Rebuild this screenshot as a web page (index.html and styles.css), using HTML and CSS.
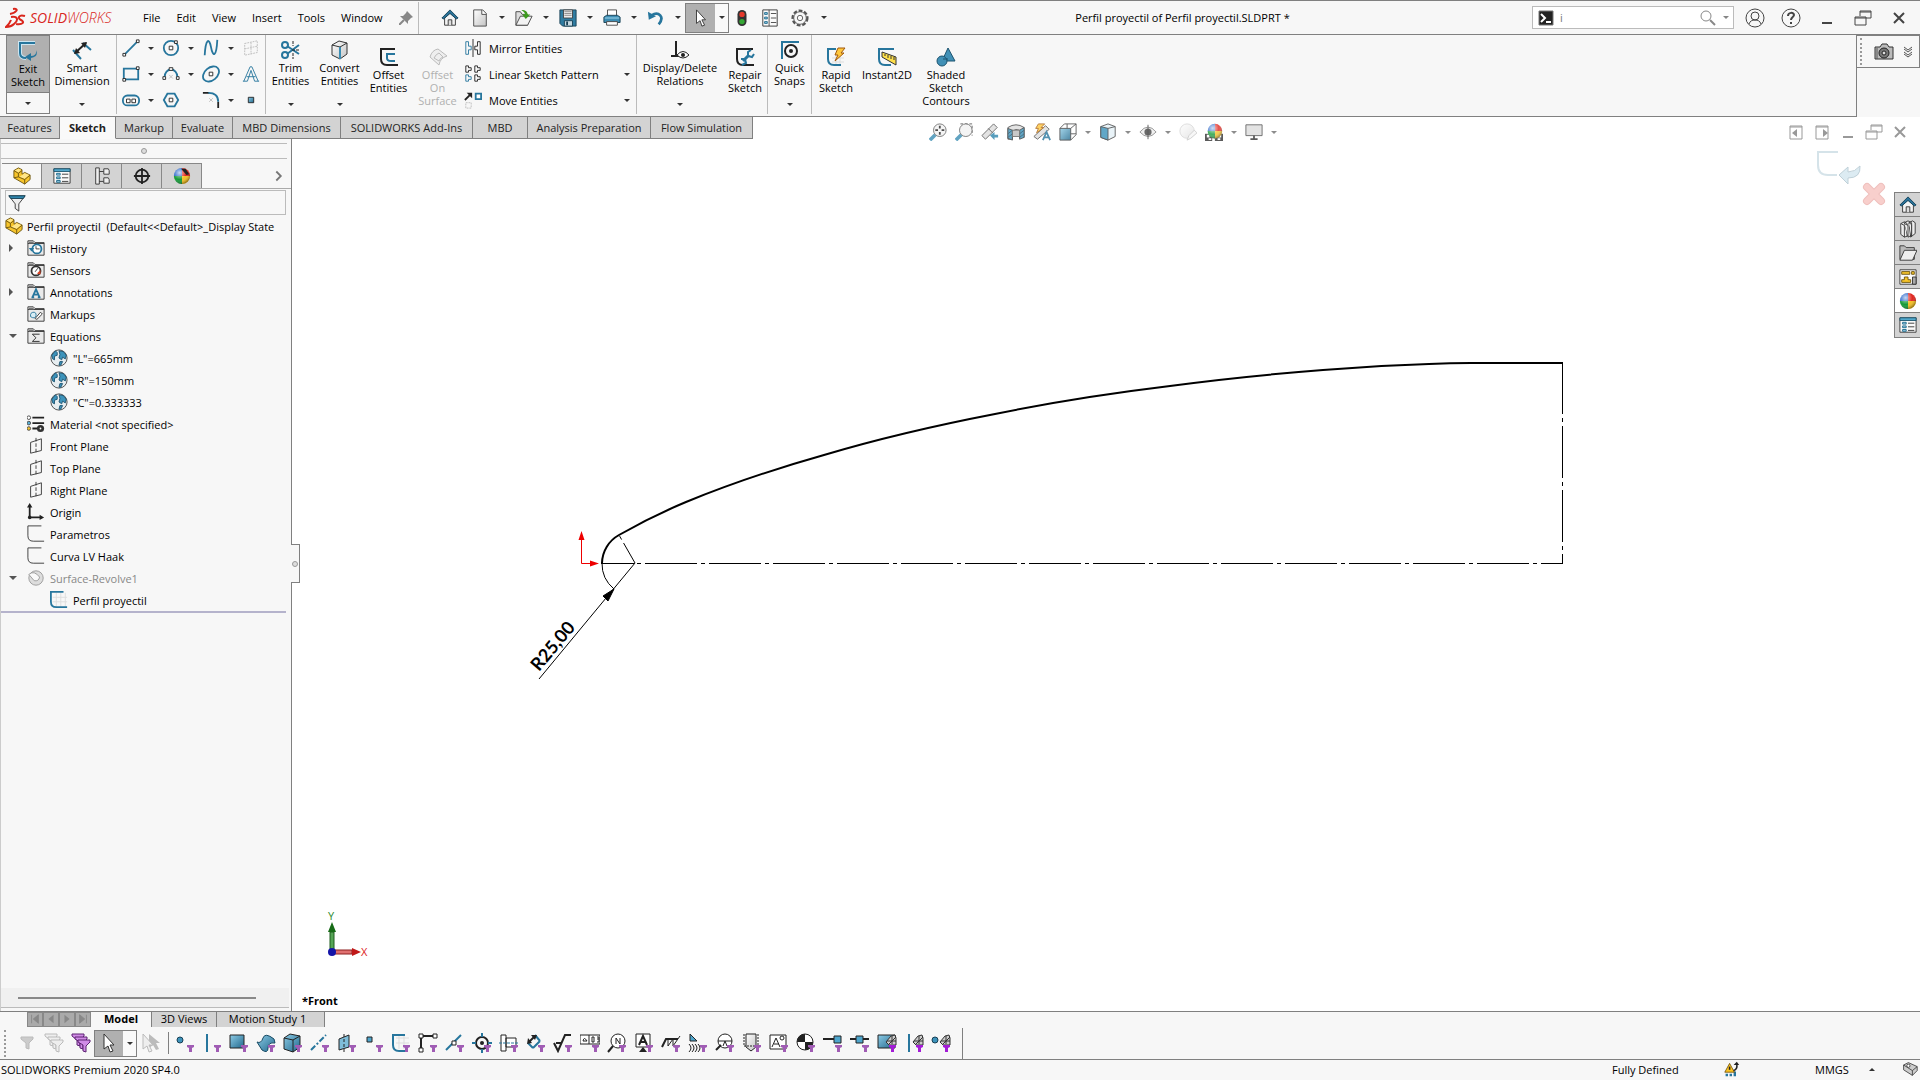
FILE: index.html
```html
<!DOCTYPE html>
<html lang="en">
<head>
  <meta charset="UTF-8">
  <meta name="viewport" content="width=device-width, initial-scale=1.0">
  <title>Perfil proyectil of Perfil proyectil.SLDPRT *</title>
  <link rel="stylesheet" href="styles.css">
</head>
<body>

  <!-- shared icons -->
  <svg class="sprite" width="0" height="0">
    <defs>
      <linearGradient id="blueFill" x1="0" y1="0" x2="1" y2="1"><stop offset="0" stop-color="#8ccbe6"/><stop offset="1" stop-color="#21688c"/></linearGradient>
      <linearGradient id="greyFill" x1="0" y1="0" x2="1" y2="1"><stop offset="0" stop-color="#fff"/><stop offset="1" stop-color="#c4c4c4"/></linearGradient>
      <radialGradient id="shine" cx=".35" cy=".3" r=".7"><stop offset="0" stop-color="#fff" stop-opacity=".75"/><stop offset=".6" stop-color="#fff" stop-opacity="0"/><stop offset="1" stop-color="#000" stop-opacity=".35"/></radialGradient>
    </defs>
    <symbol id="home" viewBox="0 0 20 20"><path d="M4 10v8h12v-8l-6-6z" fill="#f4f4f4" stroke="#333"/><path d="M8 18v-6h4v6" fill="#ddd" stroke="#333"/><path d="M1 10l9-9 9 9-2 1-7-6-7 6z" fill="#2a7399" stroke="#123f57"/></symbol>
    <symbol id="part" viewBox="0 0 20 20"><path d="M1 4l5-3 4 2v5l3-2 6 3v5l-6 5-12-7z" fill="#f7c52b" stroke="#6b5310"/><path d="M2 4l4-2 3 1-3 3zM7 11l6-4 5 2-5 4z" fill="#ffe68a"/><path d="M1 4l5 3v4l7 3v5M6 7l4-3M13 14l6-5M1 12l5-1" fill="none" stroke="#6b5310"/></symbol>
    <symbol id="list" viewBox="0 0 20 20"><path d="M1 2h18v16H1z" fill="#fafafa" stroke="#333"/><path d="M1 2h18v3H1z" fill="#52a8cc" stroke="#1d566f"/><path d="M4 7h4v2H4zM4 11h4v2H4zM4 15h4v2H4z" fill="#9fd0e6" stroke="#1d6a8c"/><path d="M10 8h7M10 12h7M10 16h7" stroke="#333"/></symbol>
    <symbol id="ball" viewBox="0 0 20 20"><path d="M10 10L10 1A9 9 0 0 1 19 10z" fill="#e0261f"/><path d="M10 10H19A9 9 0 0 1 10 19z" fill="#f6c022"/><path d="M10 10V19A9 9 0 0 1 1 10z" fill="#159a38"/><path d="M10 10H1A9 9 0 0 1 10 1z" fill="#2563c9"/><circle cx="10" cy="10" r="9" fill="url(#shine)"/></symbol>
    <symbol id="cursor" viewBox="0 0 20 20"><path d="M5 1v15l4-3 2 6 3-1-3-6h4z" fill="#fff" stroke="#333"/></symbol>
    <symbol id="folder" viewBox="0 0 20 20"><path d="M1 2h6l2 2h10v14H1z" fill="#eaeaea" stroke="#333"/><path d="M1 5h18" stroke="#333"/><path d="M2 3h5l1 2H2z" fill="#777"/></symbol>
    <symbol id="globe" viewBox="0 0 20 20"><circle cx="10" cy="10" r="9" fill="#e8eef1" stroke="#444"/><path d="M2 7l4-5 2 2 0 3-3 1 0 4-2-1zM10 2l5 1 3 4-1 4-3-2-1 3-3-2 1-4zM11 14l3 0-2 4-2 0z" fill="#3d93bb" stroke="#1d5470"/></symbol>
    <symbol id="plane" viewBox="0 0 20 20"><path d="M4 6l12-4v13L4 18z" fill="none" stroke="#333"/><path d="M10 1v18" stroke="#333" stroke-dasharray="4 2"/></symbol>
    <symbol id="sketch" viewBox="0 0 20 20"><path d="M16 1H1v11q0 6 6 6h12" fill="none" stroke="#333"/></symbol>
    <symbol id="funnel" viewBox="0 0 20 20"><path d="M12 12h7v2l-2 1v4h-3v-4l-2-1z" fill="#a05cb4"/></symbol>
    <symbol id="funnelHot" viewBox="0 0 20 20"><path d="M12 12h7v2l-2 1v4h-3v-4l-2-1z" fill="#a31cd6"/></symbol>
    <symbol id="mesh" viewBox="0 0 20 20"><path d="M9 9l5-6 4-1 1 3v7h-7z" fill="#ccc" stroke="#333"/><path d="M10 8l9 0M15 3v8M12 11l7-7" stroke="#333"/></symbol>
    <symbol id="restore" viewBox="0 0 20 20"><path d="M7 8V3h11v7h-5M2 9h11v8H2zM2 10h11M7 4h11" fill="none" stroke="currentColor"/></symbol>
    <symbol id="close" viewBox="0 0 20 20"><path d="M5 5l10 10M15 5L5 15" fill="none" stroke="currentColor" stroke-width="2"/></symbol>
    <symbol id="minimize" viewBox="0 0 20 20"><path d="M5 15h10" stroke="currentColor" stroke-width="2"/></symbol>
    <symbol id="zoomIn" viewBox="0 0 20 20"><path d="M1 19l6-6" stroke="#3a8db3" stroke-width="4"/><circle cx="12" cy="8" r="7" fill="#f2f2f2" stroke="#555"/></symbol>
  </svg>

  <header id="titlebar">
    <div id="logo">
      <svg width="22" height="22" viewBox="0 0 22 22" fill="none" stroke="#d9261c" stroke-width="2"><path d="M8 2c7-1 3 4-3 5M6 10c8-1 7 4 3 7-2 2-5 3-8 3 2-2 4-4 5-7M20 9c-6-2-8 2-4 4s2 5-5 4"/></svg>
      <span><b>SOLID</b>WORKS</span>
    </div>
    <nav id="menu">
      <button>File</button>
      <button>Edit</button>
      <button>View</button>
      <button>Insert</button>
      <button>Tools</button>
      <button>Window</button>
    </nav>
    <button class="pin" aria-label="Pin menu"><svg width="14" height="14" viewBox="0 0 14 14"><path d="M8 0l6 6-2 1-3 3v3L1 5h3l3-3z" fill="#888"/><path d="M5 9l-5 5" stroke="#888" stroke-width="2"/></svg></button>

    <div id="quickbar">
      <button class="tool home" aria-label="Home"><svg><use href="#home"/></svg></button>
      <button class="tool" aria-label="New"><svg viewBox="0 0 20 20"><path d="M3 1h10l4 4v14H3z" fill="url(#greyFill)" stroke="#444"/><path d="M12 1v5h5" fill="#fff" stroke="#444"/></svg></button><button class="drop" aria-label="New options"></button>
      <button class="tool" aria-label="Open"><svg viewBox="0 0 20 20"><path d="M1 18V3h5l2 3h6v12z" fill="#ddd" stroke="#444"/><path d="M1 18l5-10h13l-5 10z" fill="#f3f3f3" stroke="#444"/><path d="M7 1c5 0 7 2 7 5h3l-5 5-4-5h3c0-2-1-3-4-5z" fill="#3d9b1e"/></svg></button><button class="drop" aria-label="Open options"></button>
      <button class="tool" aria-label="Save"><svg viewBox="0 0 20 20"><path d="M1 1h18v18H4l-3-3z" fill="#2f7ca1" stroke="#173f54"/><path d="M5 1h10v9H5z" fill="#eee" stroke="#444"/><path d="M6 3h8M6 5h8M6 7h8" stroke="#888"/><path d="M6 13h9v6H6z" fill="#c5d9e2" stroke="#173f54"/><path d="M8 14h2v4H8z" fill="#173f54"/></svg></button><button class="drop" aria-label="Save options"></button>
      <button class="tool" aria-label="Print"><svg viewBox="0 0 20 20"><path d="M5 1h10v8H5z" fill="#fff" stroke="#444"/><path d="M1 9l3-2h12l3 2v6H1z" fill="#3d8db3" stroke="#173f54"/><path d="M4 14h12v4H4z" fill="#fff" stroke="#444"/><path d="M2 10h16" stroke="#a9dcf2"/></svg></button><button class="drop" aria-label="Print options"></button>
      <button class="tool" aria-label="Undo"><svg viewBox="0 0 20 20"><path d="M5 7c8-5 15 2 8 10" fill="none" stroke="#27769d" stroke-width="3"/><path d="M1 3l1 9 8-4z" fill="#27769d"/></svg></button><button class="drop" aria-label="Undo options"></button>
      <div class="split"><button class="tool" aria-label="Select"><svg><use href="#cursor"/></svg></button><button class="drop" aria-label="Select options"></button></div>
      <button class="tool rebuild" aria-label="Rebuild"><svg viewBox="0 0 20 20"><rect x="5" y="1" width="10" height="18" rx="5" fill="#333"/><circle cx="10" cy="6" r="3" fill="#e6392c"/><circle cx="10" cy="14" r="3" fill="#35a834"/></svg></button>
      <button class="tool wide" aria-label="File properties"><svg viewBox="0 0 20 20"><path d="M2 1h16v18H2z" fill="#fafafa" stroke="#333"/><path d="M9 1v18M11 5h6M11 10h6M11 15h6" stroke="#444"/><path d="M4 4h3v2H4zM4 9h3v2H4zM4 14h3v2H4z" fill="#9fd0e6" stroke="#1d6a8c"/></svg></button>
      <button class="tool wide" aria-label="Options"><svg viewBox="0 0 20 20"><circle cx="10" cy="10" r="8" fill="none" stroke="#555" stroke-width="3" stroke-dasharray="4 2"/><circle cx="10" cy="10" r="7" fill="#f7f7f7" stroke="#555"/><circle cx="10" cy="10" r="3" fill="none" stroke="#555"/></svg></button><button class="drop" aria-label="Options menu"></button>
    </div>

    <h1>Perfil proyectil of Perfil proyectil.SLDPRT *</h1>

    <div id="search">
      <svg width="16" height="16" viewBox="0 0 16 16"><path d="M1 1h14v14H1z" fill="#222" stroke="#777"/><path d="M3 4l4 4-4 4M8 12h5" fill="none" stroke="#fff" stroke-width="2"/></svg>
      <input type="text" value="i" aria-label="Search commands">
      <svg width="16" height="16" viewBox="0 0 16 16" fill="none" stroke="#888"><circle cx="6" cy="6" r="5"/><path d="M10 10l5 5" stroke-width="2"/></svg>
      <button class="drop" aria-label="Search options"></button>
    </div>
    <div id="windowButtons">
      <button aria-label="Log in"><svg viewBox="0 0 20 20" fill="none" stroke="#444"><circle cx="10" cy="10" r="9"/><circle cx="10" cy="8" r="4"/><path d="M4 16c1-3 3-4 6-4s5 1 6 4"/></svg></button>
      <button aria-label="Help"><svg viewBox="0 0 20 20"><circle cx="10" cy="10" r="9" fill="none" stroke="#444"/><path d="M7 8c0-4 6-4 6-1 0 2-3 2-3 5M10 14v2" fill="none" stroke="#444" stroke-width="2"/></svg></button>
      <button aria-label="Minimize"><svg><use href="#minimize"/></svg></button>
      <button aria-label="Restore"><svg><use href="#restore"/></svg></button>
      <button aria-label="Close"><svg><use href="#close"/></svg></button>
    </div>
  </header>

  <section id="ribbonRow">
    <div id="ribbon">
      <div class="group first">
        <div class="command exit"><button class="face"><svg viewBox="0 0 20 20"><path d="M17 2H2v10q0 5 6 5" fill="none" stroke="#cde6f2" stroke-width="4"/><path d="M17 2H2v10q0 5 6 5" fill="none" stroke="#27769d" stroke-width="2"/><path d="M18 9q1 6-5 6v-3l-6 4 6 4v-3q8-1 5-8z" fill="#27769d"/></svg>Exit<br>Sketch</button><button class="drop" aria-label="Exit options"></button></div>
        <div class="command dimension"><button class="face"><svg viewBox="0 0 20 20"><path d="M1 10l8 9M11 3l8 7" stroke="#27769d" stroke-width="2"/><path d="M3 13L14 3" stroke="#222" stroke-width="2"/><path d="M2 14l2-6 4 5zM15 2l-6 1 4 5z" fill="#222"/></svg>Smart<br>Dimension</button><button class="drop" aria-label="Dimension options"></button></div>
      </div>

      <div class="group sketchGrid">
        <button aria-label="Line"><svg viewBox="0 0 20 20"><path d="M3 17L17 3" stroke="#27769d" stroke-width="2"/><path d="M1 16h3v3H1zM16 1h3v3h-3z" fill="#fff" stroke="#222"/></svg></button><button class="drop" aria-label="Line options"></button>
        <button aria-label="Circle"><svg viewBox="0 0 20 20"><circle cx="10" cy="10" r="8" fill="none" stroke="#27769d" stroke-width="2"/><path d="M8 8h4v4H8zM14 2h3v3h-3z" fill="#fff" stroke="#222"/></svg></button><button class="drop" aria-label="Circle options"></button>
        <button aria-label="Spline"><svg viewBox="0 0 20 20"><path d="M3 18C4 0 8-2 10 9s6 12 7-8" fill="none" stroke="#27769d" stroke-width="2"/></svg></button><button class="drop" aria-label="Spline options"></button>
        <button aria-label="Sketch plane"><svg viewBox="0 0 20 20"><path d="M3 5l14-3v13L3 18zM10 4v13M3 11l14-3" fill="none" stroke="#bbb" stroke-dasharray="2 1"/></svg></button>

        <button aria-label="Rectangle"><svg viewBox="0 0 20 20"><path d="M2 4h16v12H2z" fill="none" stroke="#27769d" stroke-width="2"/><path d="M1 15h3v3H1zM16 2h3v3h-3z" fill="#fff" stroke="#222"/></svg></button><button class="drop" aria-label="Rectangle options"></button>
        <button aria-label="Arc"><svg viewBox="0 0 20 20"><path d="M3 13a7 8 0 0 1 14 0" fill="none" stroke="#27769d" stroke-width="2"/><path d="M1 13h3v3H1zM16 13h3v3h-3zM8 3h4v3H8z" fill="#fff" stroke="#222"/><path d="M8 11l4 4M12 11l-4 4" stroke="#bbb"/></svg></button><button class="drop" aria-label="Arc options"></button>
        <button aria-label="Ellipse"><svg viewBox="0 0 20 20"><ellipse cx="10" cy="10" rx="10" ry="7" transform="rotate(-40 10 10)" fill="none" stroke="#27769d" stroke-width="2"/><path d="M8 8h4v4H8z" fill="#fff" stroke="#222"/></svg></button><button class="drop" aria-label="Ellipse options"></button>
        <button aria-label="Text"><svg viewBox="0 0 20 20"><path d="M2 18L9 2h2l7 16M5 13h10M1 18h5M14 18h5M6 18l4-12 4 12" fill="none" stroke="#27769d"/></svg></button>

        <button aria-label="Slot"><svg viewBox="0 0 20 20"><rect x="1" y="5" width="18" height="11" rx="5" fill="none" stroke="#27769d" stroke-width="2"/><path d="M5 9h4v4H5zM11 9h4v4h-4z" fill="#fff" stroke="#222"/></svg></button><button class="drop" aria-label="Slot options"></button>
        <button aria-label="Polygon"><svg viewBox="0 0 20 20"><path d="M6 3h8l4 7-4 7H6l-4-7z" fill="none" stroke="#27769d" stroke-width="2"/><path d="M8 8h4v4H8z" fill="#fff" stroke="#222"/></svg></button><span></span>
        <button aria-label="Fillet"><svg viewBox="0 0 20 20"><path d="M1 2h7M18 12v7" stroke="#222" stroke-width="2"/><path d="M7 2q11 0 11 10" fill="none" stroke="#27769d" stroke-width="2"/><path d="M8 8l4 4M12 8l-4 4" stroke="#bbb"/></svg></button><button class="drop" aria-label="Fillet options"></button>
        <button aria-label="Point"><svg viewBox="0 0 20 20"><path d="M7 7h6v6H7z" fill="url(#blueFill)" stroke="#222"/></svg></button>
      </div>

      <div class="group">
        <div class="command"><button class="face"><svg viewBox="0 0 20 20"><circle cx="4" cy="5" r="3" fill="none" stroke="#27769d" stroke-width="2"/><circle cx="4" cy="15" r="3" fill="none" stroke="#27769d" stroke-width="2"/><path d="M6 6l12 8M6 14l12-9" stroke="#27769d" stroke-width="2"/><path d="M12 1v5M12 13v6M11 10h8" stroke="#222" stroke-dasharray="3 1"/></svg>Trim<br>Entities</button><button class="drop" aria-label="Trim options"></button></div>
        <div class="command"><button class="face"><svg viewBox="0 0 20 20"><path d="M2 5l7-4 8 2v11l-7 5-8-4z" fill="url(#greyFill)" stroke="#333"/><path d="M2 5l8 2v12" fill="none" stroke="#333"/><path d="M10 7v12" stroke="#3a8db3" stroke-width="2"/><path d="M10 7l7-4" stroke="#333"/></svg>Convert<br>Entities</button><button class="drop" aria-label="Convert options"></button></div>
        <div class="command low"><button class="face"><svg viewBox="0 0 20 20"><path d="M16 2H2v10q0 6 6 6h11" fill="none" stroke="#222" stroke-width="2"/><path d="M16 7H8v4q0 3 4 3h4" fill="none" stroke="#27769d" stroke-width="2"/></svg>Offset<br>Entities</button></div>
        <div class="command low"><button class="face" disabled><svg viewBox="0 0 20 20"><path d="M2 10q2-7 8-8l9 7q-7 2-8 9z" fill="#eee" stroke="#bbb"/><path d="M6 11q2-4 5-5l4 4q-3 1-4 4z" fill="none" stroke="#bbb"/></svg>Offset<br>On<br>Surface</button></div>
        <div class="rows">
          <div class="rowItem"><button><svg viewBox="0 0 20 20"><path d="M2 3h3v5h3v4H5v5H2z" fill="none" stroke="#27769d"/><path d="M18 3h-3v5h-3v4h3v5h3zM10 0v20" fill="none" stroke="#222"/></svg>Mirror Entities</button></div>
          <div class="rowItem"><button><svg viewBox="0 0 20 20" fill="none"><path d="M2 1h3v2h3v3H5v2H2zM12 1h3v2h3v3h-3v2h-3zM12 11h3v2h3v3h-3v2h-3z" stroke="#222"/><path d="M2 11h3v2h3v3H5v2H2z" stroke="#27769d"/></svg>Linear Sketch Pattern</button><button class="drop" aria-label="Pattern options"></button></div>
          <div class="rowItem"><button><svg viewBox="0 0 20 20"><path d="M1 10l6-6" stroke="#222" stroke-width="2"/><path d="M3 2h6v6z" fill="#222"/><path d="M13 3h6v6h-6z" fill="#fff" stroke="#27769d" stroke-width="2"/><path d="M2 13h6v6H2z" fill="none" stroke="#bbb" stroke-dasharray="2 1"/></svg>Move Entities</button><button class="drop" aria-label="Move options"></button></div>
        </div>
      </div>

      <div class="group">
        <div class="command relations"><button class="face"><svg viewBox="0 0 20 20"><path d="M6 1v14M1 16h10" stroke="#222" stroke-width="2"/><path d="M7 15q6-7 12 0-6 6-12 0z" fill="#fff" stroke="#222"/><circle cx="13" cy="15" r="2" fill="#222"/></svg>Display/Delete<br>Relations</button><button class="drop" aria-label="Relations options"></button></div>
        <div class="command low"><button class="face"><svg viewBox="0 0 20 20"><path d="M18 2H2v10q0 6 6 6h11" fill="none" stroke="#222" stroke-width="2"/><path d="M8 14l6-6" stroke="#27769d" stroke-width="3"/><path d="M16 3l-3 2 0 4 4 1 2-3M6 12l4 0 1 4-4 2" fill="none" stroke="#27769d" stroke-width="2"/></svg>Repair<br>Sketch</button></div>
      </div>

      <div class="group snaps">
        <div class="command"><button class="face"><svg viewBox="0 0 20 20"><path d="M19 2H2v17" fill="none" stroke="#27769d" stroke-width="2"/><circle cx="11" cy="11" r="6" fill="none" stroke="#222" stroke-width="2"/><circle cx="11" cy="11" r="2" fill="#222"/></svg>Quick<br>Snaps</button><button class="drop" aria-label="Snap options"></button></div>
      </div>

      <div class="group last">
        <div class="command low"><button class="face"><svg viewBox="0 0 20 20"><path d="M10 8v10M14 8v10M6 11h12M6 15h12" stroke="#ddd"/><path d="M10 2H2v10q0 6 6 6h7" fill="none" stroke="#27769d" stroke-width="2"/><path d="M12 1h7l-4 5h3l-9 8 3-6H9z" fill="#ffc83d" stroke="#a3590b"/></svg>Rapid<br>Sketch</button></div>
        <div class="command low instant"><button class="face"><svg viewBox="0 0 20 20"><path d="M17 2H2v10q0 6 6 6h6" fill="none" stroke="#27769d" stroke-width="2"/><path d="M5 5l14 5v8L5 10z" fill="#ffe04a" stroke="#333"/><path d="M8 7v2M11 8v3M14 9v3M17 10v3" stroke="#333"/></svg>Instant2D</button></div>
        <div class="command low"><button class="face"><svg viewBox="0 0 20 20"><path d="M12 1l7 13H6z" fill="#4190b6" stroke="#1d5470"/><circle cx="6" cy="14" r="5" fill="#4190b6" stroke="#1d5470"/><path d="M7 12l5 0" stroke="#1d5470"/></svg>Shaded<br>Sketch<br>Contours</button></div>
      </div>
    </div>
    <div id="ribbonSide">
      <div id="capture">
        <span class="grip"></span>
        <button aria-label="Screen capture"><svg width="20" height="20" viewBox="0 0 20 20"><path d="M1 5h5l2-3h5l2 3h4v12H1z" fill="#bbb" stroke="#333"/><circle cx="10" cy="11" r="5" fill="#777" stroke="#222"/><circle cx="10" cy="11" r="2" fill="#ddd" stroke="#222"/><path d="M3 6v11" stroke="#555"/></svg></button>
        <button aria-label="More"><svg width="12" height="12" viewBox="0 0 12 12" fill="none" stroke="#555"><path d="M2 1l4 3 4-3M2 3l4 3 4-3M2 6l4 3 4-3M2 8l4 3 4-3"/></svg></button>
      </div>
    </div>
  </section>

  <nav id="tabs">
    <button>Features</button>
    <button class="active">Sketch</button>
    <button>Markup</button>
    <button>Evaluate</button>
    <button>MBD Dimensions</button>
    <button>SOLIDWORKS Add-Ins</button>
    <button>MBD</button>
    <button>Analysis Preparation</button>
    <button>Flow Simulation</button>
  </nav>

  <main>
    <aside id="panel">
      <div class="splitter"><span class="dot"></span></div>
      <div id="panelTabs">
        <button class="active" aria-label="Feature tree"><svg><use href="#part"/></svg></button>
        <button aria-label="Properties"><svg><use href="#list"/></svg></button>
        <button aria-label="Configurations"><svg viewBox="0 0 20 20" fill="#eee" stroke="#333"><path d="M3 1h4v18H3zM7 5h5M7 16h5" /><path d="M12 2h5l1 2v4h-6zM12 12h5l1 2v4h-6z"/></svg></button>
        <button aria-label="Dimensions"><svg viewBox="0 0 20 20" fill="none" stroke="#222" stroke-width="2"><circle cx="10" cy="10" r="7"/><path d="M10 1v18M1 10h18"/></svg></button>
        <button aria-label="Display"><svg viewBox="0 0 20 20"><use href="#ball"/><path d="M9 2l5 0 4 6-3 1z" fill="#222"/></svg></button>
        <button class="more" aria-label="More tabs"><svg viewBox="0 0 20 20" fill="none" stroke="#777" stroke-width="2"><path d="M7 5l5 5-5 5"/></svg></button>
      </div>
      <div id="filter">
        <svg viewBox="0 0 20 20"><path d="M1 2h18l-7 9v8l-4-3v-5z" fill="#eee" stroke="#333"/><path d="M1 2h18l-2 3H3z" fill="#2f86ad" stroke="#173f54"/></svg>
        <input type="text" aria-label="Filter tree">
      </div>
      <ul id="tree">
        <li class="root"><svg><use href="#part"/></svg>Perfil proyectil&nbsp; (Default&lt;&lt;Default&gt;_Display State</li>
        <li class="closed"><svg viewBox="0 0 20 20"><use href="#folder"/><circle cx="11" cy="11" r="5" fill="#fff" stroke="#27769d" stroke-width="2"/><path d="M10 8v3h4" fill="none" stroke="#333"/><path d="M2 10h6l-3 4z" fill="#27769d"/></svg>History</li>
        <li><svg viewBox="0 0 20 20"><use href="#folder"/><circle cx="10" cy="11" r="5" fill="#fff" stroke="#333" stroke-width="2"/><path d="M9 12l3-4" stroke="#333"/><path d="M11 14l4-4v5z" fill="#d94020"/></svg>Sensors</li>
        <li class="closed"><svg viewBox="0 0 20 20"><use href="#folder"/><path d="M6 16l4-9 4 9M7 13h6M5 16h3M12 16h3" fill="none" stroke="#27769d" stroke-width="2"/></svg>Annotations</li>
        <li><svg viewBox="0 0 20 20"><use href="#folder"/><path d="M4 13q-1-5 4-5 3 1 2 4-1 4-6 1z" fill="#d8ecf4" stroke="#27769d"/><path d="M9 15l6-7 2 2-6 6z" fill="#fff" stroke="#333"/></svg>Markups</li>
        <li class="open"><svg viewBox="0 0 20 20"><use href="#folder"/><path d="M14 8H6l4 4-4 4h8" fill="none" stroke="#222"/></svg>Equations</li>
        <li class="child"><svg><use href="#globe"/></svg>"L"=665mm</li>
        <li class="child"><svg><use href="#globe"/></svg>"R"=150mm</li>
        <li class="child"><svg><use href="#globe"/></svg>"C"=0.333333</li>
        <li><svg viewBox="0 0 20 20"><path d="M6 3h13M6 9h13M6 15h6" stroke="#222" stroke-width="2"/><circle cx="2" cy="3" r="2" fill="#fff" stroke="#444"/><circle cx="2" cy="9" r="2" fill="#5ab0d6" stroke="#444"/><circle cx="2" cy="15" r="2" fill="#f2c12e" stroke="#444"/><circle cx="15" cy="15" r="4" fill="#333"/><circle cx="15" cy="15" r="1" fill="#fff"/></svg>Material &lt;not specified&gt;</li>
        <li><svg><use href="#plane"/></svg>Front Plane</li>
        <li><svg><use href="#plane"/></svg>Top Plane</li>
        <li><svg><use href="#plane"/></svg>Right Plane</li>
        <li><svg viewBox="0 0 20 20"><path d="M3 3v13h13" fill="none" stroke="#222" stroke-width="2"/><path d="M3 0l3 5H0zM19 16l-5-3v6z" fill="#222"/><circle cx="3" cy="16" r="2" fill="#222"/></svg>Origin</li>
        <li><svg><use href="#sketch"/></svg>Parametros</li>
        <li><svg><use href="#sketch"/></svg>Curva LV Haak</li>
        <li class="open muted"><svg viewBox="0 0 20 20"><circle cx="10" cy="10" r="8" fill="#ddd" stroke="#999"/><path d="M2 6q6-5 12 3-1 5-6 4z" fill="#fafafa" stroke="#999"/></svg>Surface-Revolve1</li>
        <li class="child"><svg viewBox="0 0 20 20"><path d="M7 2v16M12 2v16M17 2v16M3 7h16M3 12h16" stroke="#ddd"/><path d="M15 1H1v11q0 6 6 6h12" fill="none" stroke="#27769d" stroke-width="2"/></svg>Perfil proyectil</li>
      </ul>
      <div class="scrollbar"><span></span></div>
      <div class="handle"><span class="dot"></span></div>
    </aside>

    <section id="viewport">
      <svg id="drawing" viewBox="292 139 1628 872" preserveAspectRatio="xMinYMin meet" fill="none" stroke="#000">
        <!-- nose profile -->
        <path d="M602 563A33 33 0 0 1 619 535C640 523 662 512 686 502C732 483 778 468 824 455C881 438 938 425 995 414C1053 402 1112 393 1170 386C1221 379 1272 374 1323 370C1358 367 1393 365 1429 364Q1450 363 1471 363H1563" stroke-width="2"/>
        <!-- centre lines -->
        <path d="M601 563.500H634"/>
        <path d="M637 563.500H1563" stroke-dasharray="4 4 52 4"/>
        <path d="M1562.500 362V563" stroke-dasharray="52 4 4 4"/>
        <path d="M635 563L619 535" stroke-dasharray="23 4 4 4"/>
        <!-- radius dimension -->
        <path d="M602 563A33 33 0 0 0 614 589M635 563L539 679"/>
        <path d="M614 589L603 596L608 601Z" fill="#000"/>
        <text x="539" y="672" transform="rotate(-50 539 672)">R25,00</text>
        <!-- origin -->
        <path d="M581.500 540V563.500H590" stroke="#e00"/>
        <path d="M581.500 531l-3 9h6zM599 563.500l-9-3v6z" fill="#e00" stroke="none"/>
      </svg>

      <div id="hud">
        <button class="tool" aria-label="Zoom to fit"><svg viewBox="0 0 20 20"><use href="#zoomIn"/><path d="M12 3v3M12 10v3M7 8h3M14 8h3" stroke="#222" stroke-width="2"/></svg></button>
        <button class="tool" aria-label="Zoom to area"><svg viewBox="0 0 20 20"><path d="M6 1h13v13" fill="none" stroke="#333" stroke-dasharray="3 2"/><use href="#zoomIn"/></svg></button>
        <button class="tool" aria-label="Previous view"><svg viewBox="0 0 20 20"><path d="M1 14L14 1l4 4L5 18z" fill="#ddd" stroke="#444"/><path d="M8 6l5 5" stroke="#444"/><path d="M10 14l5-4v3h4v3h-4v3z" fill="#2f86ad"/></svg></button>
        <button class="tool" aria-label="Section view"><svg viewBox="0 0 20 20"><path d="M1 5q9-6 18 0v11h-5V8q-4-2-8 1v9H1z" fill="#ddd" stroke="#333"/><path d="M1 6l5 2v11l-5-2zM14 8l5-3v11l-5 2z" fill="#3a92ba" stroke="#333"/><path d="M6 8h8v7H6z" fill="#bbb" stroke="#555"/><path d="M1 12l5-4M1 16l5-4M14 12l5-4M14 16l5-4" stroke="#174a63"/></svg></button>
        <button class="tool" aria-label="Annotation view"><svg viewBox="0 0 20 20"><path d="M1 15L14 3l4 4L5 18z" fill="#ddd" stroke="#444"/><path d="M6 1h7l-4 4h3L4 11l2-5H3z" fill="#ffc83d" stroke="#a3590b"/><path d="M11 19l4-9 4 9M12 16h6" fill="none" stroke="#27769d" stroke-width="2"/></svg></button>
        <button class="tool" aria-label="View orientation"><svg viewBox="0 0 20 20"><path d="M1 6h12v13H1z" fill="url(#blueFill)" stroke="#333"/><path d="M1 6l5-5h13v12l-6 6M13 6l6-5M9 1v5M13 12h6" fill="none" stroke="#333"/></svg></button><button class="drop" aria-label="Orientation options"></button>
        <button class="tool" aria-label="Display style"><svg viewBox="0 0 20 20"><path d="M2 4l8-3 8 3v11l-8 4-8-3z" fill="#e4f1f7" stroke="#333"/><path d="M2 4l8 2v13l-8-3z" fill="#3a92ba" stroke="#333"/><path d="M10 6l8-2" stroke="#333"/></svg></button><button class="drop" aria-label="Style options"></button>
        <button class="tool" aria-label="Hide items"><svg viewBox="0 0 20 20"><path d="M1 10q9-11 18 0-9 10-18 0z" fill="#eee" stroke="#777"/><circle cx="10" cy="10" r="4" fill="#444"/><path d="M10 2v16" stroke="#333"/></svg></button><button class="drop" aria-label="Hide options"></button>
        <button class="tool" aria-label="Edit appearance"><svg viewBox="0 0 20 20" opacity=".5"><circle cx="9" cy="9" r="8" fill="url(#greyFill)" stroke="#aaa"/><path d="M9 19l2-5 6-6 3 3-7 6z" fill="#eee" stroke="#888"/></svg></button>
        <button class="tool" aria-label="Apply scene"><svg viewBox="0 0 20 20"><path d="M0 12h20v8H0z" fill="#333"/><path d="M2 13h3v3H2zM8 17h3v3H8zM15 13h3v3h-3zM14 17h3v2h-3zM4 17h3v2H4z" fill="#fff"/><svg x="2" y="0" width="16" height="16"><use href="#ball"/></svg></svg></button><button class="drop" aria-label="Scene options"></button>
        <button class="tool" aria-label="View settings"><svg viewBox="0 0 20 20"><path d="M1 2h18v12H1z" fill="#ddd" stroke="#444"/><path d="M10 14v4M6 18h8" stroke="#333" stroke-width="2"/></svg></button><button class="drop" aria-label="View options"></button>
      </div>

      <div id="docButtons">
        <button aria-label="Dock left"><svg viewBox="0 0 20 20"><path d="M4 4h12v13H4zM4 5h12" fill="none" stroke="currentColor"/><path d="M11 7v8l-5-4z" fill="currentColor"/></svg></button>
        <button aria-label="Dock right"><svg viewBox="0 0 20 20"><path d="M4 4h12v13H4zM4 5h12" fill="none" stroke="currentColor"/><path d="M11 7v8l5-4z" fill="currentColor"/></svg></button>
        <button aria-label="Minimize document"><svg><use href="#minimize"/></svg></button>
        <button aria-label="Restore document"><svg><use href="#restore"/></svg></button>
        <button aria-label="Close document"><svg><use href="#close"/></svg></button>
      </div>

      <div id="confirm">
        <button aria-label="Exit sketch"><svg width="46" height="36" viewBox="0 0 46 36"><path d="M22 2H2v13q0 10 10 10h9" fill="none" stroke="#d5e3e9" stroke-width="2"/><path d="M44 16q1 12-12 12v6L23 25l9-8v5q7 0 12-6z" fill="#dcebf2" stroke="#bfd0d8"/></svg></button>
        <button class="cancel" aria-label="Cancel sketch"><svg width="24" height="24" viewBox="0 0 24 24"><path d="M5 5l14 14M19 5L5 19" stroke="#efc0bd" stroke-width="8" stroke-linecap="round"/><path d="M5 5l14 14M19 5L5 19" stroke="#f8cfcc" stroke-width="6" stroke-linecap="round"/></svg></button>
      </div>

      <div id="taskPane">
        <button aria-label="Resources"><svg><use href="#home"/></svg></button>
        <button aria-label="Design library"><svg viewBox="0 0 20 20" fill="#eee" stroke="#333"><path d="M2 4l4-2 3 2v14l-3 1-4-3zM6 3l4-2 4 2v14l-4 2zM11 3l4-2 3 2v12l-5 4z"/><path d="M2 4l4 2v13M6 4l4 2v12M11 3l3 2v13"/></svg></button>
        <button aria-label="File explorer"><svg viewBox="0 0 20 20"><path d="M1 17V2h5l2 2h9v13z" fill="#bbb" stroke="#333"/><path d="M1 18L6 7h14l-5 11z" fill="#eee" stroke="#333"/></svg></button>
        <button aria-label="View palette"><svg viewBox="0 0 20 20"><path d="M1 2h18v16H1z" fill="#fafafa" stroke="#333"/><path d="M3 4h9v3H3zM14 4h3v3h-3zM6 10h4v3h3v3H3v-3h3z" fill="#f7c52b" stroke="#6b5310"/><path d="M15 10h4v8h-4z" fill="#aaa" stroke="#333"/></svg></button>
        <button class="active" aria-label="Appearances"><svg><use href="#ball"/></svg></button>
        <button aria-label="Custom properties"><svg><use href="#list"/></svg></button>
      </div>

      <div id="triad">
        <svg width="54" height="58" viewBox="0 0 54 58"><text x="7" y="14" fill="#2c8a2c">Y</text><text x="40" y="50" fill="#d22">X</text><path d="M9 26h4v18H9z" fill="#56a556" stroke="#1e5c1e"/><path d="M11 16l4 10H7z" fill="#176b17"/><path d="M11 44h20v4H11z" fill="#e07070" stroke="#8c1e1e"/><path d="M40 46l-9-4v8z" fill="#c01818"/><circle cx="11" cy="46" r="4" fill="#1414a8"/></svg>
        <b>*Front</b>
      </div>
    </section>
  </main>

  <div id="modelTabs">
    <div class="arrows">
      <button aria-label="First"><svg viewBox="0 0 16 14"><path d="M4 2v10M12 2v10L6 7z" fill="#888" stroke="#888"/></svg></button>
      <button aria-label="Previous"><svg viewBox="0 0 16 14"><path d="M11 2v10L5 7z" fill="#888"/></svg></button>
      <button aria-label="Next"><svg viewBox="0 0 16 14"><path d="M5 2v10l6-5z" fill="#888"/></svg></button>
      <button aria-label="Last"><svg viewBox="0 0 16 14"><path d="M12 2v10M4 2v10l6-5z" fill="#888" stroke="#888"/></svg></button>
    </div>
    <button class="active">Model</button>
    <button class="views">3D Views</button>
    <button class="motion">Motion Study 1</button>
  </div>

  <div id="filterbar">
    <span class="grip"></span>
    <button aria-label="Toggle filters"><svg viewBox="0 0 20 20"><path d="M4 4h12v2l-4 4v6l-3-1v-5L4 6z" fill="#ccc" stroke="#bbb"/></svg></button>
    <button aria-label="Clear filters"><svg viewBox="0 0 20 20" fill="#eee" stroke="#bbb"><path d="M1 1h12v2l-4 4v6l-3-1V7L1 3z"/><path d="M4 4h12v2l-4 4v6l-3-1v-6L4 6z"/><path d="M7 7h12v2l-4 4v6l-3-1v-6L7 9z"/></svg></button>
    <button aria-label="All filters"><svg viewBox="0 0 20 20" fill="#d08be6" stroke="#5d2273"><path d="M1 1h12v2l-4 4v6l-3-1V7L1 3z"/><path d="M4 4h12v2l-4 4v6l-3-1v-6L4 6z"/><path d="M7 7h12v2l-4 4v6l-3-1v-6L7 9z"/></svg></button>
    <div class="split"><button class="tool" aria-label="Select mode"><svg><use href="#cursor"/></svg></button><button class="drop" aria-label="Select mode options"></button></div>
    <button aria-label="Select over geometry"><svg viewBox="0 0 20 20"><path d="M8 1v14l4-3 3 5 3-1-3-6h4z" fill="#bbb"/><path d="M2 1v15l4-3 2 6 3-1-3-6h4z" fill="#eee" stroke="#bbb"/></svg></button>
    <span class="line"></span>
    <button aria-label="Filter vertices"><svg viewBox="0 0 20 20"><circle cx="5" cy="7" r="3" fill="#3d93bb" stroke="#173f54"/><use href="#funnel"/></svg></button>
    <button aria-label="Filter edges"><svg viewBox="0 0 20 20"><path d="M5 1v18" stroke="#27769d" stroke-width="2"/><use href="#funnel"/></svg></button>
    <button aria-label="Filter faces"><svg viewBox="0 0 20 20"><path d="M1 2h14v13H1z" fill="url(#blueFill)" stroke="#222"/><use href="#funnel"/></svg></button>
    <button aria-label="Filter surface bodies"><svg viewBox="0 0 20 20"><path d="M1 9q4 2 6-4t11 1l1 4q-7-1-7 5t-6 2z" fill="url(#blueFill)" stroke="#174a63"/><use href="#funnel"/></svg></button>
    <button aria-label="Filter solid bodies"><svg viewBox="0 0 20 20"><path d="M1 5l6-4 10 2v11l-7 5-9-3z" fill="url(#blueFill)" stroke="#222"/><path d="M1 5l9 2v12M10 7l7-4" fill="none" stroke="#222"/><use href="#funnel"/></svg></button>
    <button aria-label="Filter axes"><svg viewBox="0 0 20 20"><path d="M1 17L16 2" stroke="#27769d" stroke-width="2" stroke-dasharray="6 2 2 2"/><use href="#funnel"/></svg></button>
    <button aria-label="Filter planes"><svg viewBox="0 0 20 20"><path d="M2 6l10-4v12L2 17z" fill="#7fbdd9" stroke="#222"/><path d="M7 1v18" stroke="#222" stroke-dasharray="3 2"/><use href="#funnel"/></svg></button>
    <button aria-label="Filter sketch points"><svg viewBox="0 0 20 20"><path d="M3 4h5v5H3z" fill="#4ea5cc" stroke="#222"/><use href="#funnel"/></svg></button>
    <button aria-label="Filter sketches"><svg viewBox="0 0 20 20"><path d="M5 5h13M5 10h13M8 2v14M13 2v14" stroke="#ddd"/><path d="M14 2H2v10q0 6 6 6h6" fill="none" stroke="#27769d" stroke-width="2"/><use href="#funnel"/></svg></button>
    <button aria-label="Filter sketch segments"><svg viewBox="0 0 20 20"><path d="M3 17V3h14" fill="none" stroke="#222" stroke-width="2"/><path d="M1 1h4v4H1zM1 15h4v4H1zM15 1h4v4h-4z" fill="#fff" stroke="#222"/><use href="#funnel"/></svg></button>
    <button aria-label="Filter midpoints"><svg viewBox="0 0 20 20"><path d="M1 17L16 2" stroke="#27769d" stroke-width="2"/><path d="M7 8h4v4H7z" fill="#fff" stroke="#222"/><use href="#funnel"/></svg></button>
    <button aria-label="Filter center marks"><svg viewBox="0 0 20 20"><circle cx="10" cy="10" r="6" fill="none" stroke="#222" stroke-width="2"/><circle cx="10" cy="10" r="2" fill="#222"/><path d="M10 0v4M10 16v4M0 10h4M16 10h4" stroke="#27769d" stroke-width="2"/><use href="#funnel"/></svg></button>
    <button aria-label="Filter centerlines"><svg viewBox="0 0 20 20"><path d="M2 2h5v16H2zM7 5h10v9H7z" fill="#fff" stroke="#222"/><path d="M0 10h20" stroke="#27769d" stroke-dasharray="3 1"/><use href="#funnel"/></svg></button>
    <button aria-label="Filter dimensions"><svg viewBox="0 0 20 20"><path d="M7 15L2 10M7 15l7-7M9 2l5 6" stroke="#27769d" stroke-width="2"/><path d="M3 9l6-6" stroke="#222" stroke-width="2"/><path d="M1 11l1-6 4 5zM11 2l-6 0 4 5z" fill="#222"/><use href="#funnel"/></svg></button>
    <button aria-label="Filter surface finish"><svg viewBox="0 0 20 20"><path d="M1 10l4 8 7-16h6M3 10h6" fill="none" stroke="#222" stroke-width="2"/><use href="#funnel"/></svg></button>
    <button aria-label="Filter tolerances"><svg viewBox="0 0 20 20"><path d="M0 2h20v9H0zM9 2v9" fill="#fff" stroke="#222"/><path d="M3 8q1-5 4 0zM12 4h2v5h-2zM17 4h2M17 6h2M17 9h2M19 4v5" fill="none" stroke="#222"/><use href="#funnel"/></svg></button>
    <button aria-label="Filter notes"><svg viewBox="0 0 20 20"><circle cx="11" cy="8" r="7" fill="#fff" stroke="#222"/><path d="M9 11V5l4 6V5" fill="none" stroke="#222"/><path d="M1 19l5-6" stroke="#222" stroke-width="2"/><use href="#funnel"/></svg></button>
    <button aria-label="Filter datums"><svg viewBox="0 0 20 20"><path d="M2 1h14v13H2z" fill="#fff" stroke="#222"/><path d="M5 12l4-9 4 9M6 9h6" fill="none" stroke="#222" stroke-width="2"/><path d="M9 14l4 5H5z" fill="#222"/><use href="#funnel"/></svg></button>
    <button aria-label="Filter welds"><svg viewBox="0 0 20 20"><path d="M1 14L5 6h12" fill="none" stroke="#222" stroke-width="2"/><path d="M7 6v7l5-7v7l7-10" fill="none" stroke="#222"/><use href="#funnel"/></svg></button>
    <button aria-label="Filter weld beads"><svg viewBox="0 0 20 20"><path d="M2 1v7h7z" fill="#4ea5cc" stroke="#222"/><path d="M1 11q4 4 0 8M4 11q4 4 0 8M7 11q4 4 0 8M10 11q4 4 0 8" fill="none" stroke="#222"/><use href="#funnel"/></svg></button>
    <button aria-label="Filter datum targets"><svg viewBox="0 0 20 20"><circle cx="10" cy="8" r="7" fill="#fff" stroke="#222"/><path d="M3 8h14M8 13l2-5 2 5" fill="none" stroke="#222"/><path d="M1 17l5-5" stroke="#222" stroke-width="2"/><use href="#funnel"/></svg></button>
    <button aria-label="Filter threads"><svg viewBox="0 0 20 20"><path d="M4 1h10v13l-5 4-5-4z" fill="url(#greyFill)" stroke="#222"/><path d="M2 1v12h14V1" fill="none" stroke="#222" stroke-dasharray="2 1"/><use href="#funnel"/></svg></button>
    <button aria-label="Filter blocks"><svg viewBox="0 0 20 20"><path d="M1 2h16v14H1z" fill="#fff" stroke="#222"/><path d="M3 14l4-9 4 9M5 11h5" fill="none" stroke="#222"/><circle cx="13" cy="5" r="2" fill="none" stroke="#222"/><use href="#funnel"/></svg></button>
    <button aria-label="Filter mass centers"><svg viewBox="0 0 20 20"><circle cx="9" cy="9" r="8" fill="#fff" stroke="#222"/><path d="M9 9V1a8 8 0 0 0-8 8zM9 9v8a8 8 0 0 0 8-8z" fill="#222"/><use href="#funnel"/></svg></button>
    <button aria-label="Filter connection points"><svg viewBox="0 0 20 20"><path d="M0 6h11" stroke="#222" stroke-width="2"/><path d="M11 3h7v7h-7z" fill="#4ea5cc" stroke="#222"/><use href="#funnel"/></svg></button>
    <button aria-label="Filter routing points"><svg viewBox="0 0 20 20"><path d="M0 6h19" stroke="#222" stroke-width="2"/><path d="M6 3h7v7H6z" fill="#4ea5cc" stroke="#222"/><use href="#funnel"/></svg></button>
    <button aria-label="Filter mesh facets"><svg viewBox="0 0 20 20"><path d="M1 2h17v13H1z" fill="url(#blueFill)" stroke="#222"/><use href="#mesh"/><use href="#funnelHot"/></svg></button>
    <button aria-label="Filter mesh edges"><svg viewBox="0 0 20 20"><path d="M5 1v18" stroke="#27769d" stroke-width="2"/><use href="#mesh"/><use href="#funnelHot"/></svg></button>
    <button aria-label="Filter mesh vertices"><svg viewBox="0 0 20 20"><circle cx="4" cy="7" r="3" fill="#3d93bb" stroke="#173f54"/><use href="#mesh"/><use href="#funnelHot"/></svg></button>
    <span class="line end"></span>
  </div>

  <footer>
    <span class="product">SOLIDWORKS Premium 2020 SP4.0</span>
    <span class="state">Fully Defined</span>
    <button class="warn" aria-label="Rebuild warning"><svg viewBox="0 0 20 20"><path d="M2 19h3v-3H2zM7 19h3v-3H7zM12 19h3v-6h-3z" fill="#27769d"/><path d="M7 3l6 11H1z" fill="#ffc51f" stroke="#6b4a00"/><path d="M7 7v4" stroke="#222" stroke-width="2"/><path d="M12 12q5-2 4-7" fill="none" stroke="#222" stroke-width="2"/><path d="M12 5l4-4 3 4z" fill="#222"/></svg></button>
    <button class="units">MMGS<i></i></button>
    <button class="tag" aria-label="Tags"><svg viewBox="0 0 20 20"><path d="M2 5l6-3 11 5v5l-6 6L2 11z" fill="#ccc" stroke="#333"/><path d="M2 5l11 7 6-5M13 12v6" fill="none" stroke="#333"/><circle cx="8" cy="6" r="2" fill="#fff" stroke="#333"/></svg></button>
  </footer>

</body>
</html>
```
FILE: styles.css
```css
* {
  margin: 0;
  padding: 0;
  box-sizing: border-box;
}

body {
  font-family: "Open Sans", "Noto Sans", sans-serif;
  font-size: 11px;
  line-height: 13px;
  color: #000;
  background: #f7f7f7;
  min-height: 100vh;
  display: flex;
  flex-direction: column;
  overflow: hidden;
}

button {
  font: inherit;
  color: inherit;
  background: none;
  border: none;
  white-space: nowrap;
}

input {
  font: inherit;
  border: none;
  outline: none;
  background: none;
  min-width: 0;
  flex: 1;
}

svg {
  display: block;
  flex: none;
}

.sprite {
  position: absolute;
}

.tool {
  width: 26px;
  display: flex;
  justify-content: center;
  align-items: center;
}

.tool svg {
  width: 18px;
  height: 18px;
}

/* small down arrow */
.drop {
  width: 18px;
  display: flex;
  justify-content: center;
  align-items: center;
}

.drop::before {
  content: "";
  border: 3px solid transparent;
  border-top-color: #333;
  border-bottom: none;
}

.split {
  display: flex;
  height: 30px;
  border: 1px solid #808080;
}

.split .tool {
  width: 29px;
  background: #b0b0b0;
}

.split .drop {
  width: 13px;
  background: #f9f9f9;
}

.grip {
  width: 3px;
  height: 27px;
  border-left: 2px dotted #999;
}

.dot {
  width: 6px;
  height: 6px;
  border: 1px solid #999;
  border-radius: 50%;
  background: #ddd;
}

/* title bar */
#titlebar {
  height: 35px;
  border-top: 1px solid #808080;
  border-bottom: 1px solid #808080;
  display: flex;
  align-items: center;
}

#logo {
  width: 143px;
  padding-left: 5px;
  display: flex;
  align-items: center;
  gap: 3px;
  color: #d9261c;
  font-size: 14px;
  font-style: italic;
  font-weight: 300;
}

#menu {
  width: 256px;
  display: flex;
  gap: 16px;
}

.pin {
  width: 20px;
  height: 32px;
  border-right: 1px solid #bbb;
}

#quickbar {
  display: flex;
  align-items: center;
  margin-left: 18px;
}

.home {
  margin-right: 4px;
}

#quickbar .split {
  margin-left: -2px;
}

.wide {
  width: 30px;
}

h1 {
  flex: 1;
  font-size: 11px;
  font-weight: normal;
  text-align: center;
}

#search {
  width: 202px;
  height: 23px;
  border: 1px solid #bbb;
  background: #fff;
  display: flex;
  align-items: center;
  padding-left: 5px;
  gap: 4px;
}

#search input {
  color: #777;
  padding-left: 2px;
}

#search .drop {
  width: 12px;
  margin-right: 1px;
  opacity: .6;
}

#windowButtons {
  display: flex;
  padding: 0 3px;
  color: #444;
}

#windowButtons button {
  width: 36px;
  display: flex;
  justify-content: center;
}

#windowButtons svg {
  width: 20px;
  height: 20px;
}

/* ribbon */
#ribbonRow {
  display: flex;
  height: 82px;
}

#ribbon {
  flex: 1;
  display: flex;
  border-right: 1px solid #808080;
  border-bottom: 1px solid #808080;
}

.group {
  display: flex;
  height: 79px;
  border-right: 1px solid #bbb;
}

.group.last {
  border-right: none;
}

.group.first {
  width: 117px;
  padding-left: 6px;
}

.snaps {
  width: 44px;
}

.command {
  width: 49px;
  display: flex;
  flex-direction: column;
  align-items: center;
}

.command .face {
  flex: 1;
  display: flex;
  flex-direction: column;
  align-items: center;
  width: 100%;
  line-height: 13px;
  padding-top: 5px;
}

.command svg {
  width: 20px;
  height: 20px;
  margin-bottom: 1px;
}

.command .drop {
  height: 20px;
  width: 100%;
}

.command.low .face {
  padding-top: 12px;
}

.command .face:disabled {
  color: #b0b0b0;
}

.command.exit {
  width: 44px;
  border: 1px solid #808080;
}

.exit .face {
  background: #b0b0b0;
  border-bottom: 1px solid #808080;
}

.command.dimension {
  width: 64px;
}

.command.relations {
  width: 86px;
}

.relations + .command {
  width: 44px;
}

.snaps .command {
  width: 43px;
}

.group.last .command {
  width: 48px;
}

.group.last .command.instant {
  width: 54px;
}

.group.last .instant + .command {
  width: 64px;
}

.sketchGrid {
  display: grid;
  grid-template-columns: 22px 18px 22px 18px 22px 18px 22px;
  grid-template-rows: repeat(3, 26px);
  width: 149px;
  padding-left: 3px;
}

.sketchGrid button {
  display: flex;
  justify-content: center;
  align-items: center;
}

.sketchGrid svg {
  width: 18px;
  height: 18px;
}

.rows {
  width: 174px;
  display: flex;
  flex-direction: column;
  padding-left: 2px;
}

.rowItem {
  height: 26px;
  display: flex;
  justify-content: space-between;
}

.rowItem button:first-child {
  display: flex;
  align-items: center;
  gap: 7px;
}

.rowItem svg {
  width: 18px;
  height: 18px;
}

#ribbonSide {
  width: 63px;
}

#capture {
  height: 33px;
  border: 1px solid #808080;
  border-left: none;
  display: flex;
  align-items: center;
  padding-left: 3px;
  gap: 8px;
}

#capture .grip {
  margin-right: 3px;
}

/* command tabs */
#tabs {
  display: flex;
  height: 22px;
  background: #fff;
}

#tabs button {
  background: #d3d3d3;
  border-right: 1px solid #808080;
  border-bottom: 1px solid #808080;
  width: 60px;
  color: #222;
}

#tabs button.active {
  width: 56px;
  background: #f9f9f9;
  border-bottom-color: #f9f9f9;
  font-weight: bold;
}

#tabs button:nth-child(3) { width: 57px; }
#tabs button:nth-child(5) { width: 108px; }
#tabs button:nth-child(6) { width: 132px; }
#tabs button:nth-child(7) { width: 55px; }
#tabs button:nth-child(8) { width: 123px; }
#tabs button:nth-child(9) { width: 102px; }

main {
  flex: 1;
  display: flex;
  border-bottom: 1px solid #808080;
}

/* feature tree */
#panel {
  width: 292px;
  border-right: 1px solid #808080;
  border-left: 1px solid #ccc;
  position: relative;
  display: flex;
  flex-direction: column;
}

.splitter {
  height: 16px;
  margin: 4px 4px 4px 0;
  border-top: 1px solid #bbb;
  border-bottom: 1px solid #bbb;
  display: flex;
  justify-content: center;
  align-items: center;
}

#panelTabs {
  height: 26px;
  display: flex;
  padding-left: 1px;
  border-bottom: 1px solid #aaa;
}

#panelTabs button {
  width: 40px;
  display: flex;
  align-items: center;
  justify-content: center;
  background: #d3d3d3;
  border: 1px solid #888;
  border-width: 1px 1px 0 0;
}

#panelTabs button.active,
#panelTabs button.more {
  background: #f7f7f7;
}

#panelTabs button.more {
  margin-left: auto;
  width: 25px;
  border: none;
}

#panelTabs svg {
  width: 18px;
  height: 18px;
}

#filter {
  height: 25px;
  margin: 1px 5px 0 4px;
  border: 1px solid #bbb;
  display: flex;
  align-items: center;
  padding-left: 2px;
}

#filter svg {
  width: 18px;
  height: 18px;
}

#tree {
  list-style: none;
  margin-right: 5px;
  border-bottom: 2px solid #b5b3cc;
}

#tree li {
  height: 22px;
  display: flex;
  align-items: center;
  gap: 5px;
  padding-left: 26px;
  white-space: nowrap;
  overflow: hidden;
}

#tree svg {
  width: 18px;
  height: 18px;
}

#tree .root {
  padding-left: 4px;
  gap: 4px;
}

#tree .child {
  padding-left: 49px;
}

#tree .muted {
  color: #888;
}

#tree .closed,
#tree .open {
  padding-left: 8px;
}

#tree .closed::before,
#tree .open::before {
  content: "";
  width: 13px;
  height: 8px;
  background: #555;
  clip-path: polygon(0 0, 4px 4px, 0 8px);
}

#tree .open::before {
  clip-path: polygon(0 2px, 8px 2px, 4px 6px);
}

.scrollbar {
  margin: auto 2px 3px 0;
  height: 20px;
  background: #f0f0f0;
  border-bottom: 1px solid #bbb;
  padding: 9px 33px 0 17px;
}

.scrollbar span {
  display: block;
  height: 2px;
  background: #888;
}

/* collapse handle sits on the panel edge */
.handle {
  position: absolute;
  top: 405px;
  right: -9px;
  width: 9px;
  height: 39px;
  border: 1px solid #808080;
  border-left: none;
  background: #f7f7f7;
  display: flex;
  align-items: center;
  justify-content: center;
  z-index: 1;
}

/* graphics area */
#viewport {
  flex: 1;
  position: relative;
  background: #fff;
}

#drawing {
  width: 100%;
}

#drawing text {
  font-family: Lato, sans-serif;
  font-size: 18px;
  font-weight: bold;
  fill: #000;
  stroke: none;
}

#hud {
  position: absolute;
  top: -17px;
  left: 0;
  right: 6px;
  height: 20px;
  display: flex;
  justify-content: center;
  opacity: .8;
}

#hud .drop {
  width: 14px;
  opacity: .7;
}

#docButtons {
  position: absolute;
  top: -17px;
  right: 7px;
  display: flex;
  color: #999;
}

#docButtons button {
  width: 26px;
  display: flex;
  justify-content: center;
}

#docButtons svg {
  width: 20px;
  height: 20px;
}

#confirm {
  position: absolute;
  top: 11px;
  right: 34px;
  width: 70px;
  display: flex;
  flex-direction: column;
}

#confirm .cancel {
  align-self: flex-end;
  margin-top: -4px;
}

#taskPane {
  position: absolute;
  top: 53px;
  right: 0;
  width: 26px;
  border: 1px solid #808080;
  border-right: none;
}

#taskPane button {
  width: 100%;
  height: 24px;
  display: flex;
  align-items: center;
  justify-content: center;
  background: #d3d3d3;
  border-bottom: 1px solid #808080;
}

#taskPane button:last-child {
  border-bottom: none;
}

#taskPane .active {
  background: #fff;
}

#taskPane svg {
  width: 18px;
  height: 18px;
}

#triad {
  position: absolute;
  left: 10px;
  bottom: 4px;
}

#triad svg {
  margin: 0 0 30px 19px;
}

/* bottom tabs */
#modelTabs {
  display: flex;
  height: 15px;
  padding-left: 27px;
}

#modelTabs button {
  line-height: 12px;
  padding-bottom: 2px;
  width: 60px;
}

#modelTabs .active {
  font-weight: bold;
}

#modelTabs .views,
#modelTabs .motion {
  width: 66px;
  background: #d3d3d3;
  border-right: 1px solid #808080;
  border-left: 1px solid #808080;
}

#modelTabs .motion {
  width: 108px;
  border-left: none;
  padding-right: 6px;
}

.arrows {
  display: flex;
  background: #aaa;
}

#modelTabs .arrows button {
  width: 16px;
  border: 1px solid #888;
}

.arrows svg {
  height: 12px;
  width: 14px;
}

/* selection filters */
#filterbar {
  height: 33px;
  border-bottom: 1px solid #808080;
  display: flex;
  align-items: center;
  padding-left: 4px;
}

#filterbar .grip {
  margin-right: 6px;
}

#filterbar > button {
  width: 27px;
  display: flex;
  justify-content: center;
}

#filterbar svg {
  width: 20px;
  height: 20px;
}

#filterbar .split {
  height: 27px;
}

#filterbar .split .tool {
  width: 28px;
}

.line {
  width: 1px;
  height: 22px;
  margin: 0 2px 0 4px;
  background: #808080;
}

.line.end {
  height: 31px;
  margin-left: 8px;
}

/* status bar */
footer {
  height: 20px;
  display: flex;
  align-items: center;
  padding-bottom: 2px;
}

.product {
  flex: 1;
  padding-left: 1px;
}

.state {
  width: 112px;
}

.warn,
.tag {
  width: 18px;
}

footer svg {
  width: 16px;
  height: 16px;
}

.units {
  margin-left: 73px;
  width: 87px;
  display: flex;
  align-items: center;
  gap: 20px;
}

.units i {
  border: 3px solid transparent;
  border-bottom-color: #333;
  border-top: none;
}
```
